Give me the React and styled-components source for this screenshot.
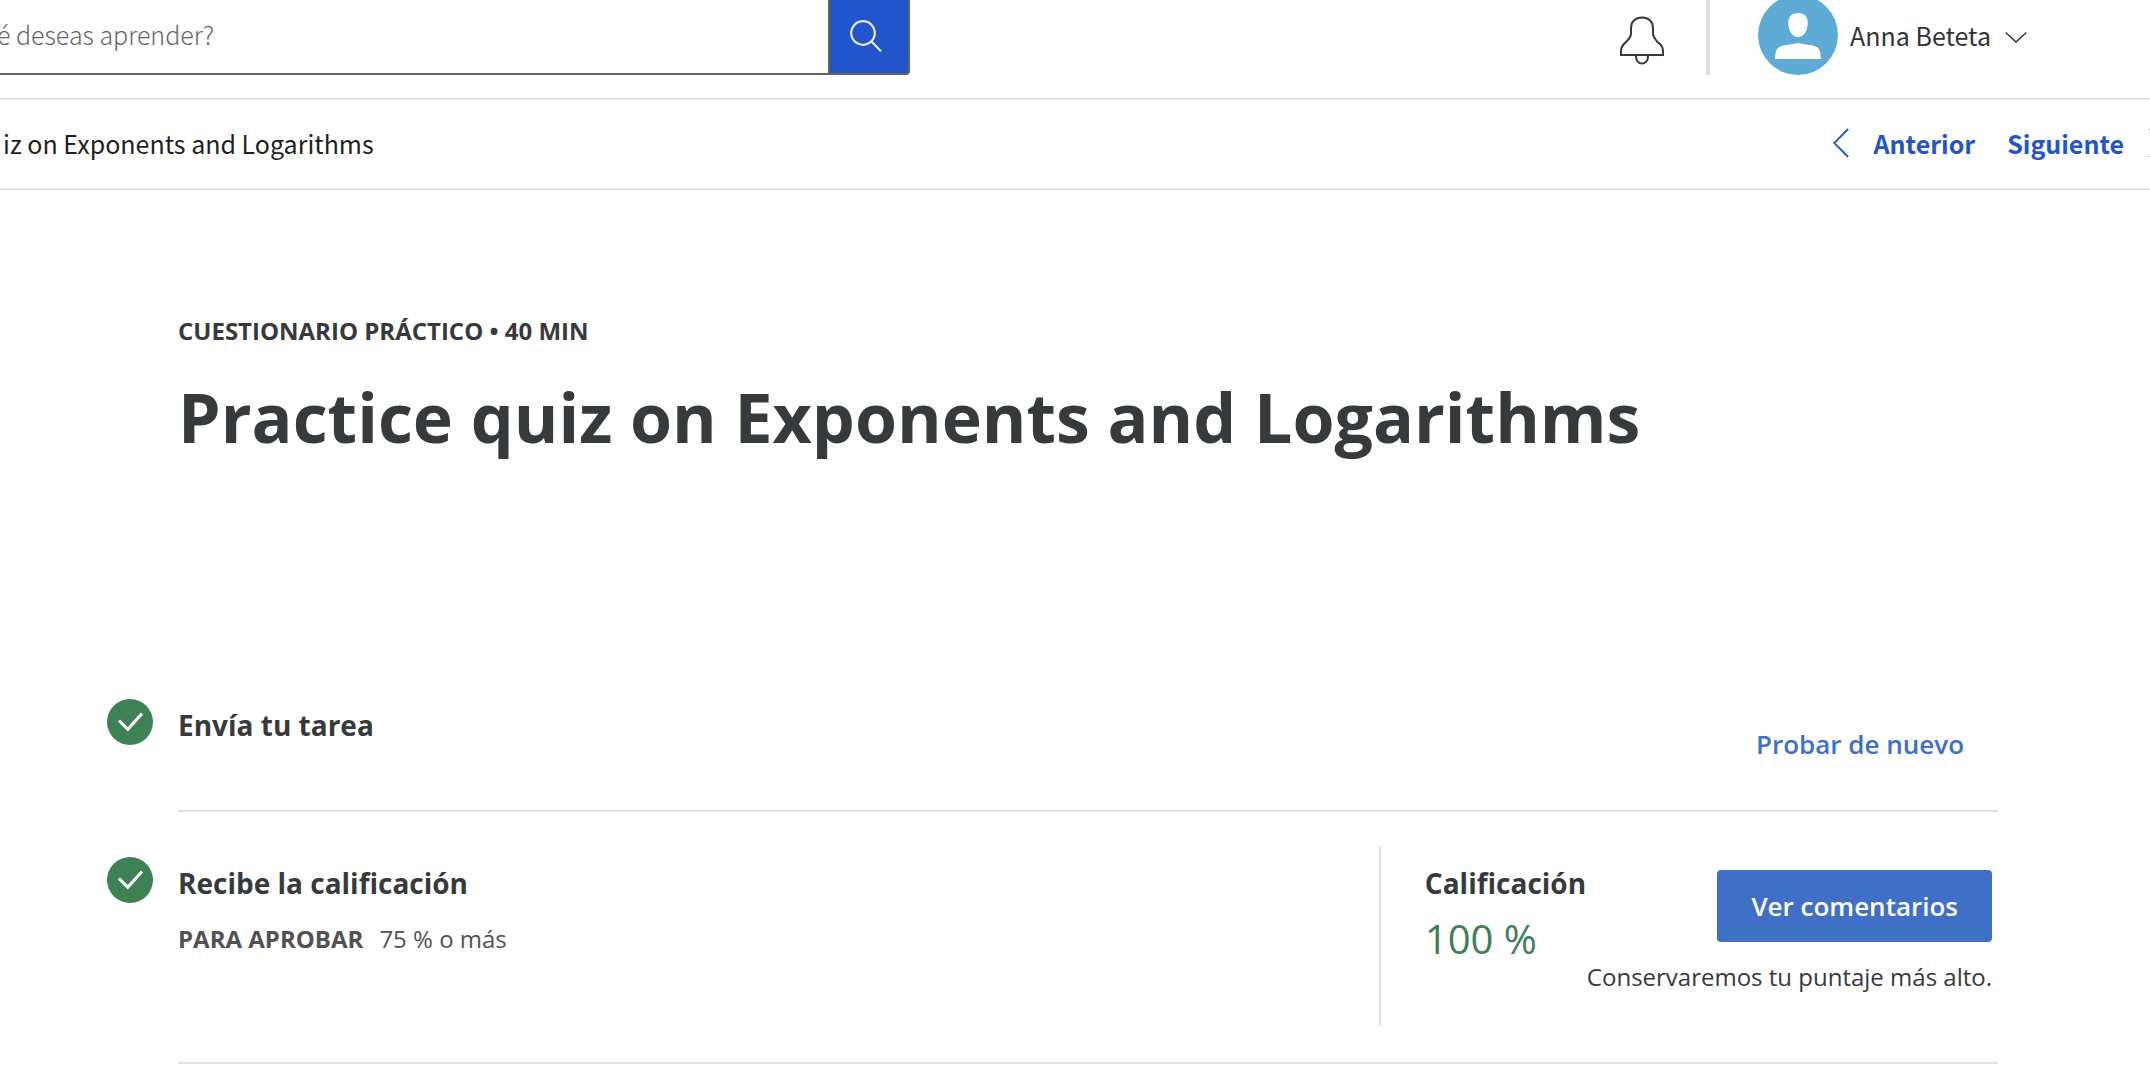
import React from "react";
import styled, { createGlobalStyle } from "styled-components";

const SANS = `"Open Sans", "Noto Sans", sans-serif`;
const NAV = `"Noto Sans CJK SC", "Open Sans", sans-serif`;
const LINE = "#e0e0e0";

const GlobalStyle = createGlobalStyle`
  * { box-sizing: border-box; }
  body { margin: 0; background: #fff; color: #373a3c; font-family: ${SANS}; overflow-x: hidden; }
  h1, h2, h3, p { margin: 0; }
  button, input { font: inherit; margin: 0; }
  svg { display: block; flex: none; }
`;

const Header = styled.header`
  display: flex;
  align-items: flex-end;
  justify-content: space-between;
  height: 100px;
  padding: 0 123px 23px 0;
  border-bottom: 2px solid ${LINE};
  overflow: hidden;
  font-family: ${NAV};
`;

const Search = styled.form`
  display: flex;
  flex: 0 1 910px;
  height: 80px;
`;

const SearchInput = styled.input`
  flex: 1;
  min-width: 0;
  padding: 16px 0;
  border: 0;
  border-bottom: 2px solid #636363;
  border-radius: 0;
  outline: 0;
  background: #fff;
  font-weight: 300;
  font-size: 25px;
  line-height: 36px;
  text-indent: -3px;
  &::placeholder { color: #666; opacity: 1; }
`;

const SearchButton = styled.button`
  display: flex;
  align-items: center;
  justify-content: center;
  width: 82px;
  padding: 2px 6px 0 0;
  border: 2px solid #636363;
  border-radius: 0 4px 4px 0;
  background: #2254ca;
`;

const Account = styled.div`
  display: flex;
  align-items: flex-end;
`;

const BellButton = styled.button`
  display: flex;
  padding: 0 42px 10px 0;
  border: 0;
  background: none;
`;

const Divider = styled.span`
  width: 4px;
  height: 80px;
  background: ${LINE};
`;

const ProfileButton = styled.button`
  display: flex;
  align-items: center;
  gap: 12px;
  padding: 0 0 0 48px;
  border: 0;
  background: none;
  color: #333;
  font-size: 25px;
  line-height: 36px;
`;

const ProfileName = styled.span`
  margin-right: 2px;
`;

const Crumbs = styled.nav`
  display: flex;
  align-items: center;
  justify-content: space-between;
  height: 90px;
  padding: 0 0 2px 3px;
  border-bottom: 2px solid ${LINE};
  overflow: hidden;
  color: #1f1f1f;
  font-family: ${NAV};
  font-size: 25px;
  line-height: 36px;
`;

const Pager = styled.div`
  display: flex;
  gap: 32px;
  margin-right: -15px;
`;

const PagerLink = styled.a`
  display: flex;
  align-items: center;
  gap: 25px;
  color: #2254ca;
  font-weight: 700;
  text-decoration: none;
`;

const Main = styled.main`
  padding: 125px 152px 20px 107px;
`;

const Intro = styled.div`
  padding-left: 71px;
`;

const Eyebrow = styled.p`
  font-weight: 700;
  font-size: 24px;
  line-height: 32px;
  text-transform: uppercase;
`;

const Title = styled.h1`
  margin-top: 24px;
  font-weight: 700;
  font-size: 68px;
  line-height: 92px;
`;

const Steps = styled.section`
  margin-top: 193px;
`;

const Step = styled.article`
  display: flex;
  align-items: flex-start;
  gap: 25px;
  padding-top: ${(p) => (p.$first ? 0 : 34)}px;
`;

const StepIcon = styled.div`
  margin-top: ${(p) => (p.$first ? 43 : 11)}px;
`;

const StepBody = styled.div`
  display: flex;
  flex: 1;
  justify-content: space-between;
  min-height: ${(p) => p.$height}px;
  border-bottom: 2px solid ${LINE};
`;

const StepText = styled.div`
  padding-top: ${(p) => (p.$first ? 49 : 17)}px;
`;

const Heading = styled.h2`
  font-weight: 700;
  font-size: 28px;
  line-height: 40px;
`;

const Requirement = styled.p`
  margin-top: 18px;
  color: #525252;
  font-size: 24px;
  line-height: 36px;
  strong { margin-right: 16px; }
`;

const RetryButton = styled.button`
  align-self: flex-start;
  margin-top: 60px;
  padding: 8px 34px;
  border: 0;
  background: none;
  color: #3d70c8;
  font-weight: 600;
  font-size: 26px;
  line-height: 40px;
`;

const Result = styled.div`
  display: flex;
  height: 180px;
  padding: 17px 6px 0 44px;
  border-left: 2px solid ${LINE};
`;

const Grade = styled.div`
  width: 162px;
  white-space: nowrap;
`;

const Score = styled.p`
  margin-top: 8px;
  color: #3e8155;
  font-size: 40px;
  line-height: 56px;
`;

const Feedback = styled.div`
  display: flex;
  flex-direction: column;
  align-items: flex-end;
  gap: 17px;
  padding-top: 7px;
`;

const FeedbackButton = styled.button`
  padding: 16px 34px;
  border: 0;
  border-radius: 4px;
  background: #4070c6;
  color: #fff;
  font-weight: 600;
  font-size: 26px;
  line-height: 40px;
`;

const Note = styled.p`
  font-size: 24px;
  line-height: 36px;
  white-space: nowrap;
`;

function SearchIcon() {
  return (
    <svg width="32" height="32" viewBox="0 0 32 32" fill="none" stroke="#e8e8e8" strokeWidth="2.2" strokeLinecap="round" aria-hidden="true">
      <circle cx="13" cy="13" r="11.8" />
      <path d="M21.5 21.5 30.5 30.7" />
    </svg>
  );
}

function BellIcon() {
  return (
    <svg width="44" height="49" viewBox="0 0 44 49" fill="none" stroke="#373a44" strokeWidth="2" aria-hidden="true">
      <path d="M1 39V35C1 30.500 3 28.500 6.500 25.500C10 22 11 20.500 11 17.500V12C11 5.500 15.500 1.500 22 1.500S33 5.500 33 12V17.500C33 20.500 34.500 22 37 25.500C41 29 43 30.500 43 35V39Z" />
      <path d="M16 39V41A6 6.500 0 0 0 28 41V39" />
    </svg>
  );
}

function Avatar() {
  return (
    <svg width="80" height="80" viewBox="0 0 80 80" aria-hidden="true">
      <circle cx="40" cy="40" r="40" fill="#5eacd6" />
      <path fill="#fff" d="M40 18C46 18 50 22 49.800 28C49.500 35 46.500 42 40 42S30.500 35 30.200 28C30 22 34 18 40 18Z" />
      <path fill="#fff" d="M17 64C17.500 59 17.500 55 20.500 52.500C24 50 33 49.500 40 48C47 49.500 56 50 59.500 52.500C62.500 55 62.500 59 63 64Z" />
    </svg>
  );
}

function ChevronDown() {
  return (
    <svg width="22" height="16" viewBox="0 0 22 16" fill="none" stroke="#333" strokeWidth="1.5" aria-hidden="true">
      <path d="M.7 5.500 11 15 21.300 5.500" />
    </svg>
  );
}

function ChevronSide({ right }) {
  return (
    <svg width="16" height="30" viewBox="0 0 16 30" fill="none" stroke="#2254ca" strokeWidth="1.800" aria-hidden="true">
      <path d={right ? "M.8 1 15 15 .8 29" : "M15.200 1 1.200 15 15.200 29"} />
    </svg>
  );
}

function CheckIcon() {
  return (
    <svg width="46" height="46" viewBox="0 0 46 46" role="img" aria-label="Completado">
      <circle cx="23" cy="23" r="23" fill="#3e8155" />
      <path d="M12 21.500 20.800 30.300 35 14.500" fill="none" stroke="#fff" strokeWidth="3" />
    </svg>
  );
}

export default function App() {
  return (
    <>
      <GlobalStyle />
      <Header>
        <Search onSubmit={(e) => e.preventDefault()}>
          <SearchInput type="text" aria-label="Buscar" placeholder="é deseas aprender?" />
          <SearchButton type="submit" aria-label="Buscar">
            <SearchIcon />
          </SearchButton>
        </Search>
        <Account>
          <BellButton type="button" aria-label="Notificaciones">
            <BellIcon />
          </BellButton>
          <Divider />
          <ProfileButton type="button">
            <Avatar />
            <ProfileName>Anna Beteta</ProfileName>
            <ChevronDown />
          </ProfileButton>
        </Account>
      </Header>
      <Crumbs>
        <span>iz on Exponents and Logarithms</span>
        <Pager>
          <PagerLink href="#anterior">
            <ChevronSide />
            Anterior
          </PagerLink>
          <PagerLink href="#siguiente">
            Siguiente
            <ChevronSide right />
          </PagerLink>
        </Pager>
      </Crumbs>
      <Main>
        <Intro>
          <Eyebrow>Cuestionario práctico • 40 min</Eyebrow>
          <Title>Practice quiz on Exponents and Logarithms</Title>
        </Intro>
        <Steps>
          <Step $first>
            <StepIcon $first>
              <CheckIcon />
            </StepIcon>
            <StepBody $height={156}>
              <StepText $first>
                <Heading>Envía tu tarea</Heading>
              </StepText>
              <RetryButton type="button">Probar de nuevo</RetryButton>
            </StepBody>
          </Step>
          <Step>
            <StepIcon>
              <CheckIcon />
            </StepIcon>
            <StepBody $height={218}>
              <StepText>
                <Heading>Recibe la calificación</Heading>
                <Requirement>
                  <strong>PARA APROBAR</strong>75 % o más
                </Requirement>
              </StepText>
              <Result>
                <Grade>
                  <Heading as="h3">Calificación</Heading>
                  <Score>100 %</Score>
                </Grade>
                <Feedback>
                  <FeedbackButton type="button">Ver comentarios</FeedbackButton>
                  <Note>Conservaremos tu puntaje más alto.</Note>
                </Feedback>
              </Result>
            </StepBody>
          </Step>
        </Steps>
      </Main>
    </>
  );
}
